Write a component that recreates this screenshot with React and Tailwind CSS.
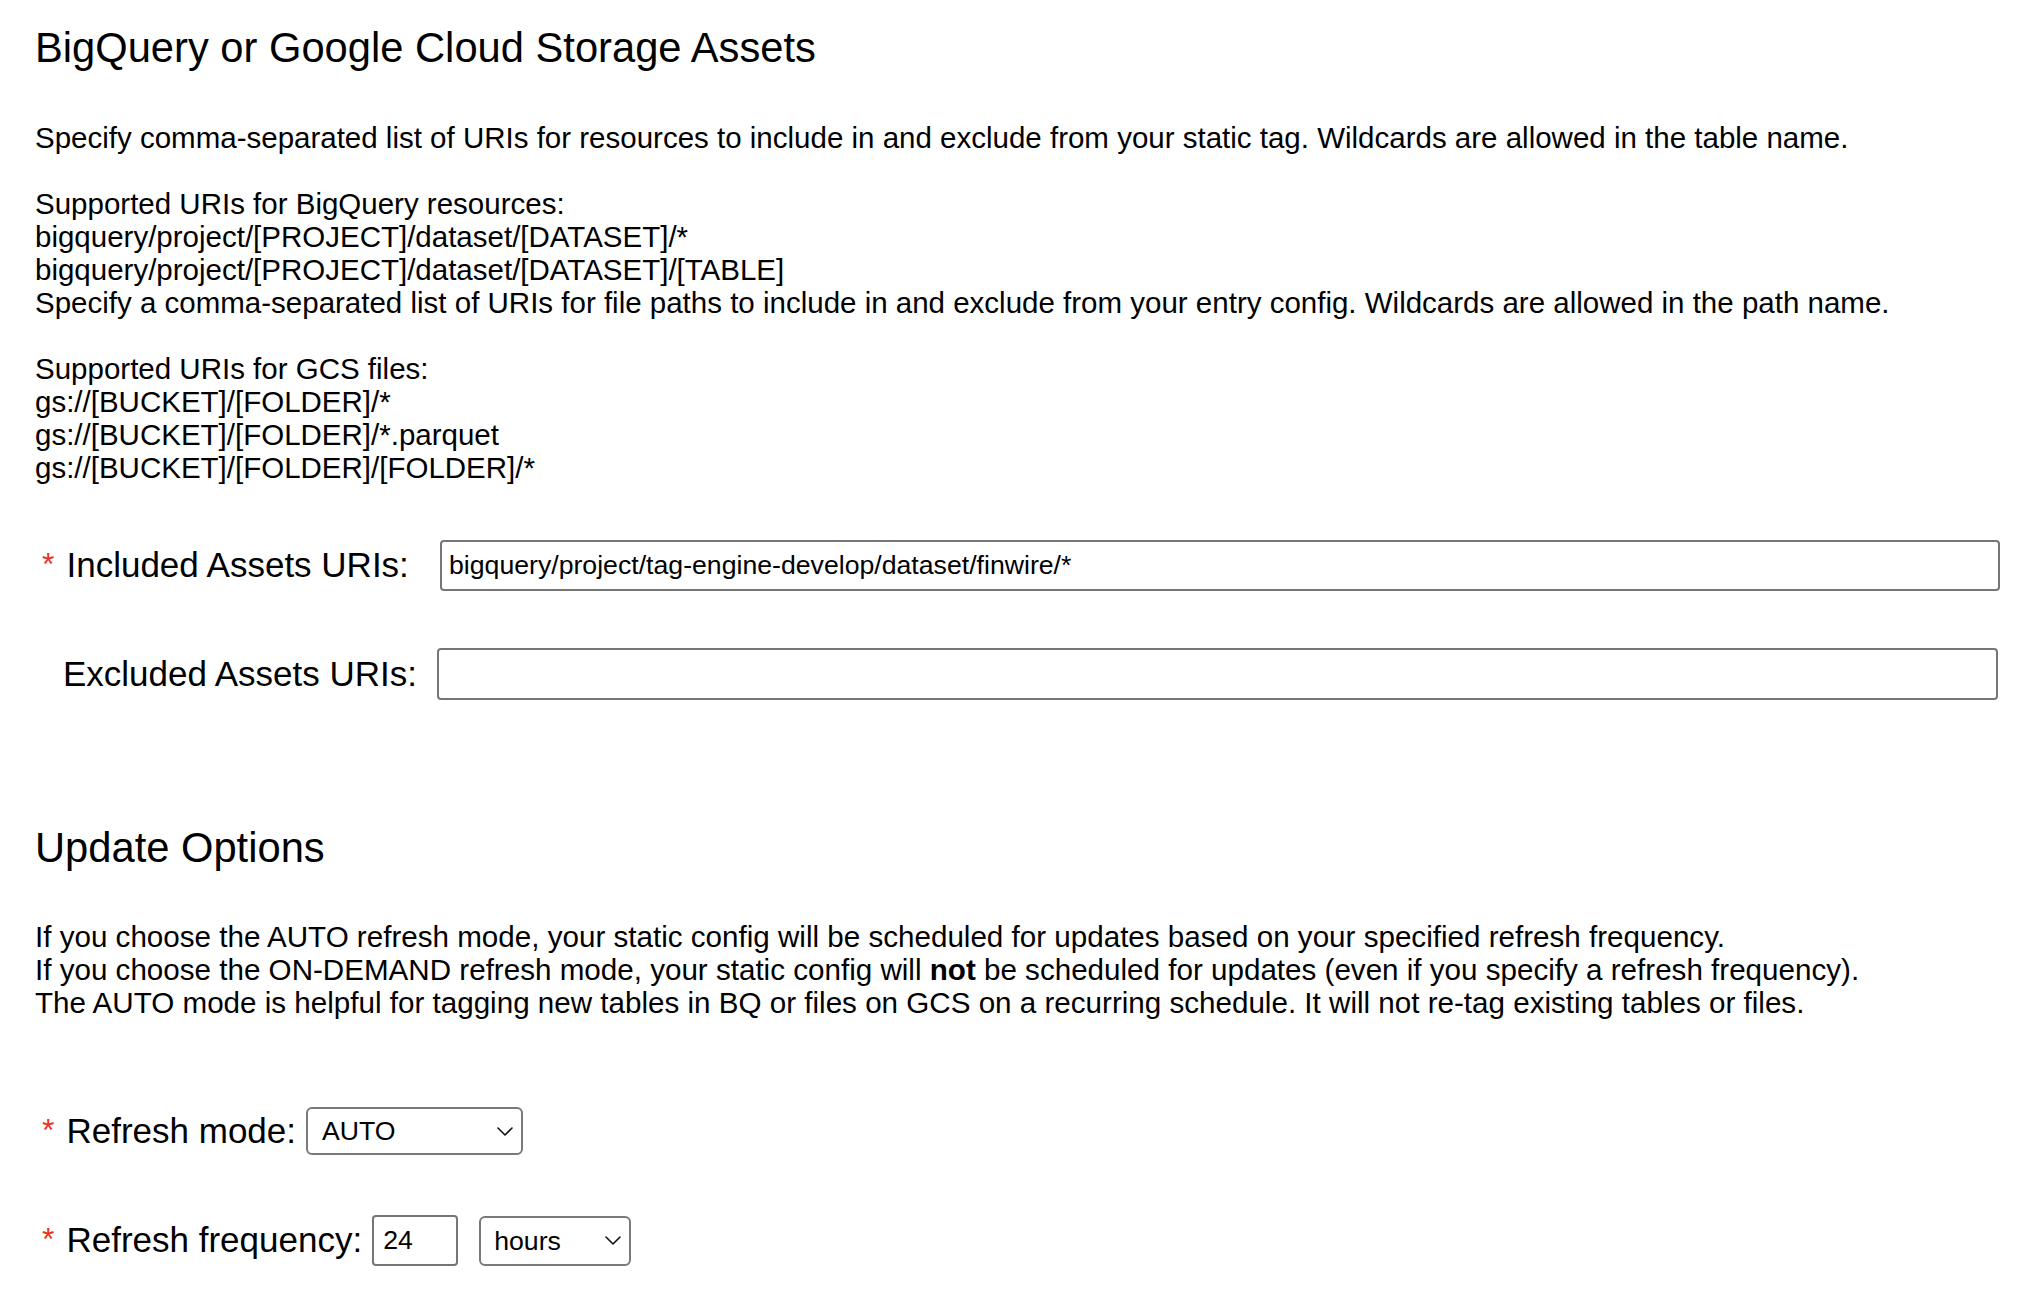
import React from "react";

const font = { fontFamily: '"Liberation Sans", Arial, Helvetica, sans-serif' };

function Star() {
  return <span className="text-[32px] text-[#eb3323] align-[2px]">*</span>;
}

function Chevron() {
  return (
    <svg width="16" height="9" viewBox="0 0 16 9" fill="none" className="shrink-0">
      <path d="M1 1l7 7 7-7" stroke="#111" strokeWidth="1.6" strokeLinecap="round" strokeLinejoin="round" />
    </svg>
  );
}

function FakeSelect({ value, width, height }) {
  return (
    <div
      className={`flex items-center justify-between bg-white border-2 border-[#7a7a7a] rounded-[6px] pr-[8px] text-[26.67px] text-black ${width} ${height}`}
    >
      <span>{value}</span>
      <Chevron />
    </div>
  );
}

export default function App() {
  return (
    <div className="min-h-screen bg-white text-black pl-[35px] pt-[24px]" style={font}>
      <h2 className="text-[41.7px] leading-[48px] font-normal">BigQuery or Google Cloud Storage Assets</h2>

      <p className="mt-[49px] text-[29.5px] leading-[33px]">
        Specify comma-separated list of URIs for resources to include in and exclude from your static tag. Wildcards are
        allowed in the table name.
        <br />
        <br />
        Supported URIs for BigQuery resources:
        <br />
        bigquery/project/[PROJECT]/dataset/[DATASET]/*
        <br />
        bigquery/project/[PROJECT]/dataset/[DATASET]/[TABLE]
        <br />
        Specify a comma-separated list of URIs for file paths to include in and exclude from your entry config. Wildcards
        are allowed in the path name.
        <br />
        <br />
        Supported URIs for GCS files:
        <br />
        gs://[BUCKET]/[FOLDER]/*
        <br />
        gs://[BUCKET]/[FOLDER]/*.parquet
        <br />
        gs://[BUCKET]/[FOLDER]/[FOLDER]/*
      </p>

      <div className="mt-[56px] flex items-center h-[51px] pl-[7px]">
        <label className="w-[398px] shrink-0 whitespace-nowrap">
          <Star />
          <span className="ml-[12px] text-[35px]">Included Assets URIs:</span>
        </label>
        <input
          readOnly
          value="bigquery/project/tag-engine-develop/dataset/finwire/*"
          className="w-[1560px] h-[51px] border-2 border-[#767676] rounded-[4px] px-[7px] text-[26.67px] text-black outline-none"
          style={font}
        />
      </div>

      <div className="mt-[57px] flex items-center h-[52px] pl-[8px]">
        <label className="w-[394px] shrink-0 whitespace-nowrap pl-[20px]">
          <span className="text-[35px]">Excluded Assets URIs:</span>
        </label>
        <input
          readOnly
          value=""
          className="w-[1561px] h-[52px] border-2 border-[#767676] rounded-[4px] px-[7px] text-[26.67px] outline-none"
          style={font}
        />
      </div>

      <h2 className="mt-[124px] text-[41.7px] leading-[48px] font-normal">Update Options</h2>

      <p className="mt-[48px] text-[29.6px] leading-[33px]">
        If you choose the AUTO refresh mode, your static config will be scheduled for updates based on your specified
        refresh frequency.
        <br />
        If you choose the ON-DEMAND refresh mode, your static config will <b className="font-bold">not</b> be scheduled
        for updates (even if you specify a refresh frequency).
        <br />
        The AUTO mode is helpful for tagging new tables in BQ or files on GCS on a recurring schedule. It will not re-tag
        existing tables or files.
      </p>

      <div className="mt-[88px] flex items-center h-[48px] pl-[7px]">
        <label className="shrink-0 whitespace-nowrap">
          <Star />
          <span className="ml-[12px] text-[35px]">Refresh mode:</span>
        </label>
        <div className="ml-[10px]">
          <FakeSelect value="AUTO" width="w-[217px] pl-[14px]" height="h-[48px]" />
        </div>
      </div>

      <div className="mt-[60px] flex items-center h-[51px] pl-[7px]">
        <label className="shrink-0 whitespace-nowrap">
          <Star />
          <span className="ml-[12px] text-[35px]">Refresh frequency:</span>
        </label>
        <input
          readOnly
          value="24"
          className="ml-[10px] w-[86px] h-[51px] border-2 border-[#767676] rounded-[4px] px-[9px] text-[26.67px] text-black outline-none"
          style={font}
        />
        <div className="ml-[21px]">
          <FakeSelect value="hours" width="w-[152px] pl-[13px]" height="h-[50px]" />
        </div>
      </div>
    </div>
  );
}
